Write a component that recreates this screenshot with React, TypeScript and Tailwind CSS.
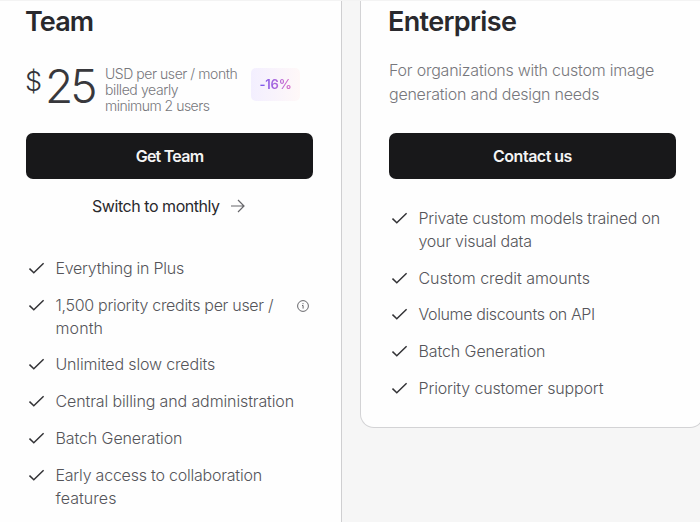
import { clsx } from 'clsx';

type Feature = {
  lines: { text: string; spacing: string }[];
  info?: boolean;
};

const teamFeatures: Feature[] = [
  { lines: [{ text: 'Everything in Plus', spacing: 'tracking-[-0.26px]' }] },
  {
    lines: [
      { text: '1,500 priority credits per user /', spacing: 'tracking-[-0.3px]' },
      { text: 'month', spacing: 'tracking-[0.1px]' },
    ],
    info: true,
  },
  { lines: [{ text: 'Unlimited slow credits', spacing: 'tracking-[-0.16px]' }] },
  { lines: [{ text: 'Central billing and administration', spacing: 'tracking-[-0.12px]' }] },
  { lines: [{ text: 'Batch Generation', spacing: 'tracking-[-0.1px]' }] },
  {
    lines: [
      { text: 'Early access to collaboration', spacing: 'tracking-[-0.22px]' },
      { text: 'features', spacing: 'tracking-[0.05px]' },
    ],
  },
];

const enterpriseFeatures: Feature[] = [
  {
    lines: [
      { text: 'Private custom models trained on', spacing: 'tracking-[-0.22px]' },
      { text: 'your visual data', spacing: 'tracking-[-0.25px]' },
    ],
  },
  { lines: [{ text: 'Custom credit amounts', spacing: 'tracking-[-0.04px]' }] },
  { lines: [{ text: 'Volume discounts on API', spacing: 'tracking-[-0.38px]' }] },
  { lines: [{ text: 'Batch Generation', spacing: 'tracking-[-0.1px]' }] },
  { lines: [{ text: 'Priority customer support', spacing: 'tracking-[-0.16px]' }] },
];

function CheckIcon() {
  return (
    <svg className="mt-[5px] ml-[3px] h-3 w-4 shrink-0" viewBox="0 0 16 12" fill="none" stroke="#333336" strokeWidth="1.5">
      <path d="M0.5 6.6L4.8 10.8L14.6 1.2" />
    </svg>
  );
}

function InfoIcon() {
  return (
    <svg className="mt-[6px] h-3 w-3 shrink-0" viewBox="0 0 12 12" fill="none" stroke="#67676b">
      <circle cx="6" cy="6" r="5.4" />
      <path d="M5 5.5H6.1V8.6M6 3.1V4.2" />
    </svg>
  );
}

function FeatureList({ features }: { features: Feature[] }) {
  return (
    <ul className="flex flex-col gap-[13.8px]">
      {features.map((feature) => (
        <li key={feature.lines[0].text} className="flex items-start text-base leading-[22.95px] font-light text-[#55555a]">
          <CheckIcon />
          <div className="ml-[10.5px] grow">
            {feature.lines.map((line) => (
              <p key={line.text} className={clsx('whitespace-nowrap', line.spacing)}>{line.text}</p>
            ))}
          </div>
          {feature.info && <div className="mr-1"><InfoIcon /></div>}
        </li>
      ))}
    </ul>
  );
}

function PlanButton({ label, spacing }: { label: string; spacing: string }) {
  return (
    <button className={clsx('block h-[46px] w-[287px] rounded-[7px] bg-[#18181a] text-base font-semibold text-[#f4f4f4]', spacing)}>
      {label}
    </button>
  );
}

export default function App() {
  return (
    <div className="flex h-[522px] w-[700px] items-start gap-[18px] overflow-hidden border-t border-[#f3f3f3] bg-[#f6f6f6] font-['Inter',sans-serif]">
      <section className="h-[521px] w-[342px] shrink-0 border-r border-[#cfcfd1] bg-[#fefefe] pl-[26px]">
        <h2 className="-ml-px h-[62px] pt-[5px] text-[27px] leading-8 font-semibold tracking-[-0.9px] text-[#29292d]">Team</h2>
        <div className="flex h-[70px] items-start">
          <span className="-ml-px w-[15px] pt-[3px] text-[27px] leading-8 font-light text-[#333338]">$</span>
          <span className="ml-[5px] w-[50px] text-[46px] leading-[46px] font-light tracking-[-3px] text-[#38383c]">25</span>
          <div className="ml-[10px] w-[146px] pt-[3px] text-sm leading-4 font-light whitespace-nowrap text-[#77777c]">
            <p className="tracking-[-0.45px]">USD per user / month</p>
            <p className="tracking-[-0.4px]">billed yearly</p>
            <p className="tracking-[-0.5px]">minimum 2 users</p>
          </div>
          <span className="mt-[5px] flex h-[33px] w-[49px] items-center justify-center rounded-[5px] bg-linear-to-r from-[#f3efff] to-[#fff8f8]">
            <span className="bg-linear-to-r from-[#7657ef] to-[#db6bc6] bg-clip-text text-[13px] font-semibold tracking-[-0.2px] text-transparent">-16%</span>
          </span>
        </div>
        <PlanButton label="Get Team" spacing="tracking-[-0.75px]" />
        <a className="mt-[15px] ml-[66px] flex h-6 items-center text-base text-[#29292d]">
          <span className="tracking-[-0.45px]">Switch to monthly</span>
          <svg className="ml-[10px] h-4 w-4" viewBox="0 0 16 16" fill="none" stroke="#66666a" strokeWidth="1.2">
            <path d="M1 8H14M8 2L14 8L8 14" />
          </svg>
        </a>
        <div className="mt-[39px] w-[287px]">
          <FeatureList features={teamFeatures} />
        </div>
      </section>

      <section className="h-[427px] w-[344px] shrink-0 rounded-b-[14px] border-x border-b border-[#d3d3d5] bg-[#fefefe] pl-[28px]">
        <h2 className="-ml-px h-[57px] pt-[5px] text-[27px] leading-8 font-semibold tracking-[-0.65px] text-[#29292d]">Enterprise</h2>
        <div className="h-[75px] text-base leading-6 font-light whitespace-nowrap text-[#77777c]">
          <p className="tracking-[-0.22px]">For organizations with custom image</p>
          <p className="tracking-[-0.24px]">generation and design needs</p>
        </div>
        <PlanButton label="Contact us" spacing="tracking-[-0.5px]" />
        <div className="mt-[28px] w-[287px]">
          <FeatureList features={enterpriseFeatures} />
        </div>
      </section>
    </div>
  );
}
